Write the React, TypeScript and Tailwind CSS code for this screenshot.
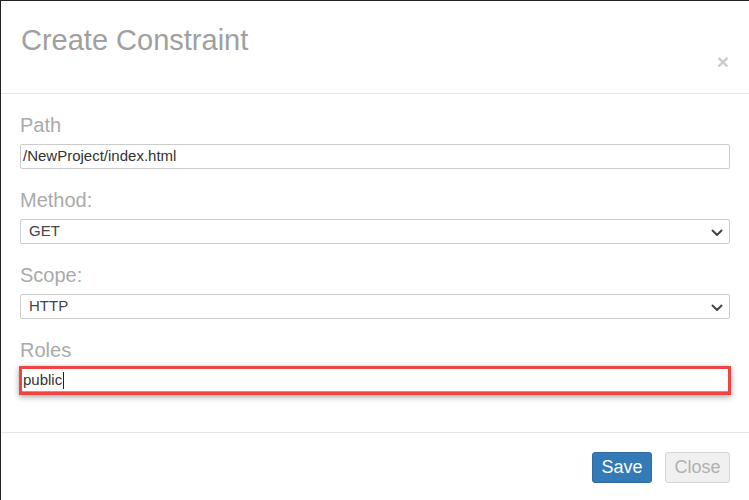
import React from "react";

const Chevron = () => (
  <svg width="12" height="8" viewBox="0 0 12 8" className="absolute right-[6px] top-[9px]">
    <path d="M1.5 1.5 L6 6 L10.5 1.5" fill="none" stroke="#444" strokeWidth="2" strokeLinecap="round" strokeLinejoin="round" />
  </svg>
);

function Label({ children }: { children: React.ReactNode }) {
  return (
    <div className="h-[22px] text-[20px] leading-[22px] text-[#aaaaaa] mb-[8px]">{children}</div>
  );
}

function SelectBox({ value }: { value: string }) {
  return (
    <div className="relative h-[25px] border border-[#cccccc] rounded-[2px] bg-white flex items-center pl-[8px] text-[15px] text-[#444]">
      {value}
      <Chevron />
    </div>
  );
}

export default function App() {
  return (
    <div className="w-[749px] h-[500px] bg-[#222222] pl-[1px] pt-[1px] overflow-hidden" style={{ fontFamily: '"Liberation Sans", Arial, sans-serif' }}>
      <div className="w-[748px] h-[499px] bg-white flex flex-col">
        <div className="h-[93px] shrink-0 border-b border-[#e5e5e5] relative pl-[20px] pt-[23px]">
          <div className="text-[29px] leading-[32px] text-[#a0a0a0]">Create Constraint</div>
          <div className="absolute right-[20px] top-[49px] text-[21px] font-bold leading-[24px] text-[#cccccc]">×</div>
        </div>
        <div className="h-[339px] shrink-0 border-b border-[#e5e5e5] px-[19px] pt-[20px]">
          <Label>Path</Label>
          <div className="h-[25px] border border-[#cccccc] rounded-[2px] flex items-center pl-[2px] text-[15px] text-[#333]">/NewProject/index.html</div>
          <div className="h-[20px]" />
          <Label>Method:</Label>
          <SelectBox value="GET" />
          <div className="h-[20px]" />
          <Label>Scope:</Label>
          <SelectBox value="HTTP" />
          <div className="h-[20px]" />
          <div className="h-[22px] text-[20px] leading-[22px] text-[#aaaaaa] mb-[5px]">Roles</div>
          <div className="-mx-[1px] h-[29px] border-[3px] border-[#f24343] shadow-[0_2px_6px_rgba(0,0,0,0.35)] flex items-center">
            <div className="flex-1 h-full border-b border-[#66afe9] flex items-center pl-[1px] text-[15px] text-[#333]">
              public<span className="inline-block w-[1px] h-[17px] bg-[#222] ml-[1px]" />
            </div>
          </div>
        </div>
        <div className="flex justify-end gap-[13px] pr-[19px] pt-[19px]">
          <div className="w-[60px] h-[31px] rounded-[3px] bg-[#337ab7] border border-[#2e6da4] text-white text-[18px] flex items-center justify-center">Save</div>
          <div className="w-[65px] h-[31px] rounded-[3px] bg-[#f0f0f0] border border-[#d5d5d5] text-[#b0b0b0] text-[18px] flex items-center justify-center">Close</div>
        </div>
      </div>
    </div>
  );
}
